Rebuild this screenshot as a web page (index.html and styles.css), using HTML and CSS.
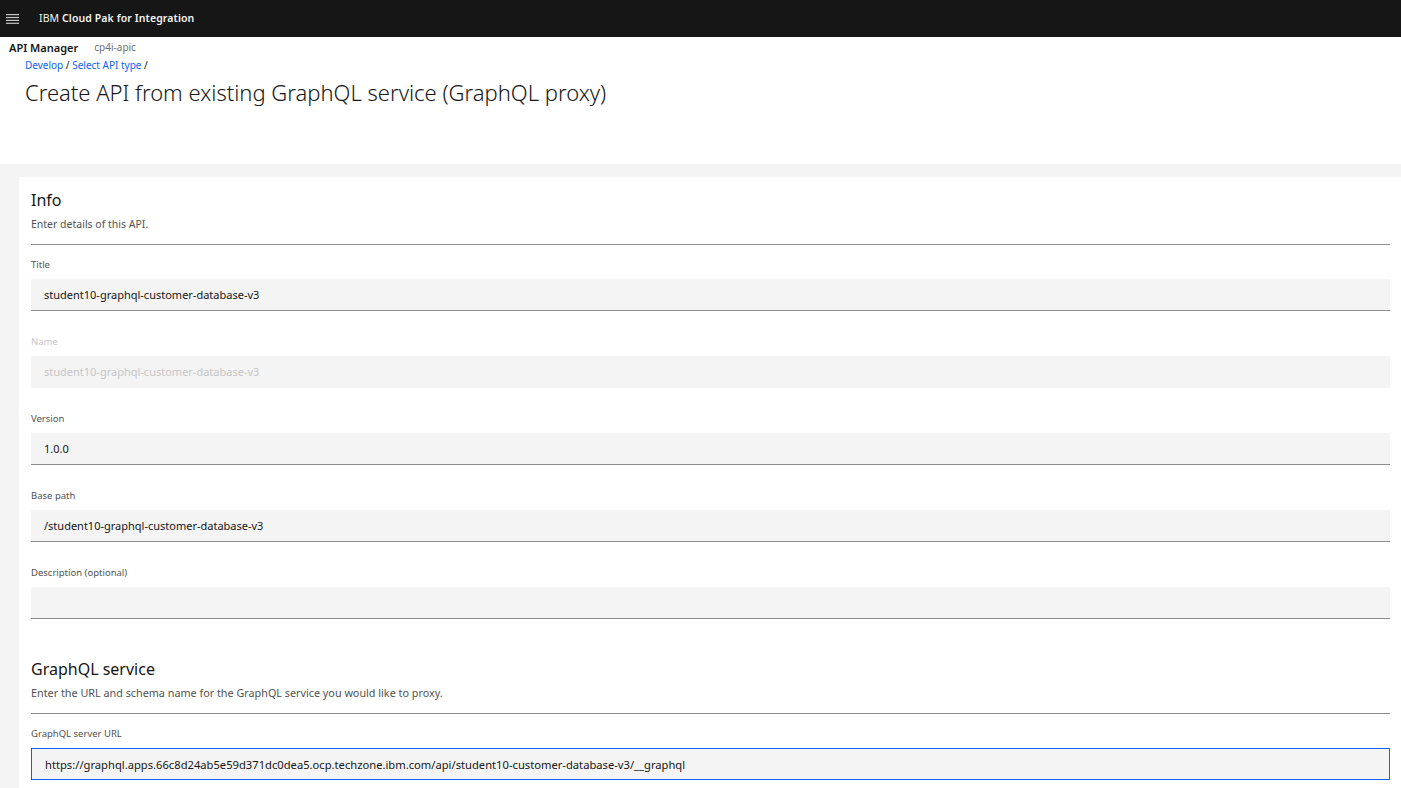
FILE: index.html
```html
<!DOCTYPE html>
<html lang="en">
<head>
<meta charset="utf-8">
<title>Create API from existing GraphQL service</title>
<link rel="stylesheet" href="styles.css">
</head>
<body>
<header class="shell">
  <button class="menu" aria-label="Menu">
    <svg width="13" height="10" viewBox="0 0 13 10"><rect x="0" y="0" width="13" height="1.2" fill="#c6c6c6"/><rect x="0" y="2.9" width="13" height="1.2" fill="#c6c6c6"/><rect x="0" y="5.8" width="13" height="1.2" fill="#c6c6c6"/><rect x="0" y="8.7" width="13" height="1.2" fill="#c6c6c6"/></svg>
  </button>
  <div class="brand">IBM <b>Cloud Pak for Integration</b></div>
</header>
<div class="subbar">
  <span class="product">API Manager</span>
  <span class="instance">cp4i-apic</span>
</div>
<div class="pagehead">
  <nav class="crumbs"><a href="#">Develop</a> / <a href="#">Select API type</a> /</nav>
  <h1>Create API from existing GraphQL service (GraphQL proxy)</h1>
</div>
<main class="content">
  <section class="card">
    <div class="group">
      <h2>Info</h2>
      <p class="desc">Enter details of this API.</p>
    </div>
    <div class="field">
      <label>Title</label>
      <input type="text" value="student10-graphql-customer-database-v3">
    </div>
    <div class="field disabled">
      <label>Name</label>
      <input type="text" value="student10-graphql-customer-database-v3" disabled>
    </div>
    <div class="field">
      <label>Version</label>
      <input type="text" value="1.0.0">
    </div>
    <div class="field">
      <label>Base path</label>
      <input type="text" value="/student10-graphql-customer-database-v3">
    </div>
    <div class="field">
      <label>Description (optional)</label>
      <input type="text" value="">
    </div>
    <div class="group second">
      <h2>GraphQL service</h2>
      <p class="desc">Enter the URL and schema name for the GraphQL service you would like to proxy.</p>
    </div>
    <div class="field focus">
      <label>GraphQL server URL</label>
      <input type="text" value="https://graphql.apps.66c8d24ab5e59d371dc0dea5.ocp.techzone.ibm.com/api/student10-customer-database-v3/__graphql">
    </div>
  </section>
</main>
</body>
</html>
```
FILE: styles.css
```css
* { box-sizing: border-box; }
html, body { margin: 0; padding: 0; height: 100%; }
body {
  font-family: "Noto Sans", "Liberation Sans", sans-serif;
  color: #161616;
  background: #fff;
  overflow: hidden;
}
.shell {
  height: 37px;
  background: #161616;
  display: flex;
  align-items: center;
  padding-bottom: 2px;
}
.menu {
  width: 25px;
  height: 35px;
  background: none;
  border: 0;
  padding: 2px 0 0 6px;
  display: flex;
  align-items: center;
}
.brand {
  margin-left: 14px;
  color: #f4f4f4;
  font-size: 10.5px;
  letter-spacing: 0.1px;
}
.brand b { font-weight: 600; }
.subbar {
  height: 20px;
  display: flex;
  align-items: center;
  padding-left: 9px;
}
.product { font-size: 11px; font-weight: 600; }
.instance { font-size: 10px; color: #6f6f6f; margin-left: 16px; }
.pagehead {
  height: 107px;
  padding-left: 25px;
}
.crumbs { font-size: 10px; color: #161616; line-height: 16px; }
.crumbs a { color: #0f62fe; text-decoration: none; }
h1 {
  margin: 4px 0 0;
  font-size: 22px;
  font-weight: 300;
  line-height: 30px;
}
.content {
  background: #f4f4f4;
  padding: 13px 0 0 19px;
  height: calc(100% - 164px);
}
.card {
  background: #fff;
  height: 100%;
  padding: 12px 11px 0 12px;
}
.group {
  border-bottom: 1px solid #8d8d8d;
  padding-bottom: 12px;
}
.group.second { margin-top: 39px; padding-bottom: 12px; }
h2 {
  margin: 0;
  font-size: 16px;
  font-weight: 400;
  line-height: 22px;
}
.desc {
  margin: 5px 0 0;
  font-size: 10.5px;
  color: #525252;
  line-height: 16px;
}
.second .desc { font-size: 10.8px; }
.field { margin-top: 12px; }
.field + .field { margin-top: 23px; }
.field label {
  display: block;
  font-size: 9.5px;
  color: #525252;
  line-height: 16px;
  margin-bottom: 6px;
}
.field input {
  display: block;
  width: 100%;
  height: 32px;
  border: 0;
  border-bottom: 1px solid #8d8d8d;
  background: #f4f4f4;
  padding: 0 13px;
  font-family: inherit;
  font-size: 11px;
  color: #161616;
  outline: none;
}
.field.disabled label { color: #c6c6c6; }
.field.disabled input { color: #c6c6c6; border-bottom-color: transparent; }
.field.focus input { border: 1px solid #0f62fe; font-size: 11.2px; }
```
